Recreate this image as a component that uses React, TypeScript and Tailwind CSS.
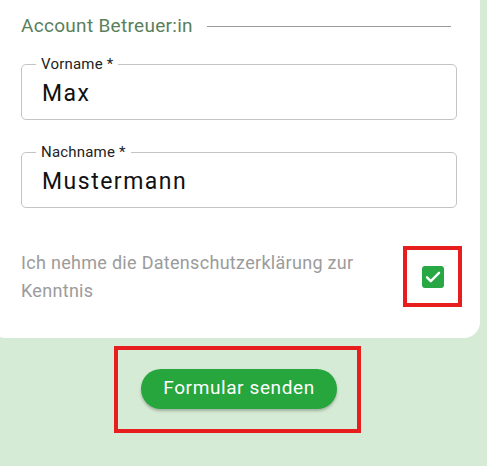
import React from "react";

function Field({ label, value }: { label: string; value: string }) {
  return (
    <div className="relative h-[56px] rounded-[5px] border border-[#c4c4c4] flex items-center pl-[20px]">
      <span className="absolute -top-[10px] left-[14px] bg-white px-[5px] text-[15px] leading-[18px] text-[#222] tracking-[0.2px]">
        {label}
      </span>
      <span className="text-[23px] text-[#111] tracking-[1.5px] pt-[4px]">{value}</span>
    </div>
  );
}

export default function App() {
  return (
    <div
      className="w-[487px] h-[466px] overflow-hidden bg-[#d6ebd5]"
      style={{ fontFamily: "Roboto, 'Liberation Sans', sans-serif" }}
    >
      <div className="w-[490px] -ml-[10px] bg-white rounded-b-[16px] pl-[31px] pr-[23px] pt-[14px] pb-[31px]">
        <div className="flex items-center gap-[14px] mr-[6px]">
          <span className="text-[19px] leading-[24px] text-[#5a7f5c] tracking-[0.3px]">Account Betreuer:in</span>
          <div className="flex-1 h-px bg-[#9a9a9a]" />
        </div>
        <div className="mt-[26px]">
          <Field label="Vorname *" value="Max" />
        </div>
        <div className="mt-[32px]">
          <Field label="Nachname *" value="Mustermann" />
        </div>
        <div className="mt-[38px] flex items-center justify-between">
          <p className="text-[18px] leading-[28px] text-[#9b9b9b] w-[375px] tracking-[0.3px]">
            Ich nehme die Datenschutzerklärung zur Kenntnis
          </p>
          <div className="w-[59px] h-[61px] border-[4px] border-[#e61e1e] flex items-center justify-center -mr-[5px]">
            <div className="w-[22px] h-[22px] rounded-[3px] bg-[#28a745] flex items-center justify-center">
              <svg width="18" height="18" viewBox="0 0 24 24" fill="none">
                <path d="M4 12.5l5 5L20 6.5" stroke="white" strokeWidth="3.2" strokeLinecap="round" strokeLinejoin="round" />
              </svg>
            </div>
          </div>
        </div>
      </div>
      <div className="mt-[8px] ml-[114px] w-[247px] h-[87px] border-[4px] border-[#e61e1e] flex items-center justify-center">
        <button className="w-[196px] h-[40px] rounded-full bg-[#26a63c] text-white text-[19px] font-normal tracking-[0.6px] shadow-[0_2px_3px_rgba(0,0,0,0.25)] ml-[3px] mt-[-2px]">
          Formular senden
        </button>
      </div>
    </div>
  );
}
